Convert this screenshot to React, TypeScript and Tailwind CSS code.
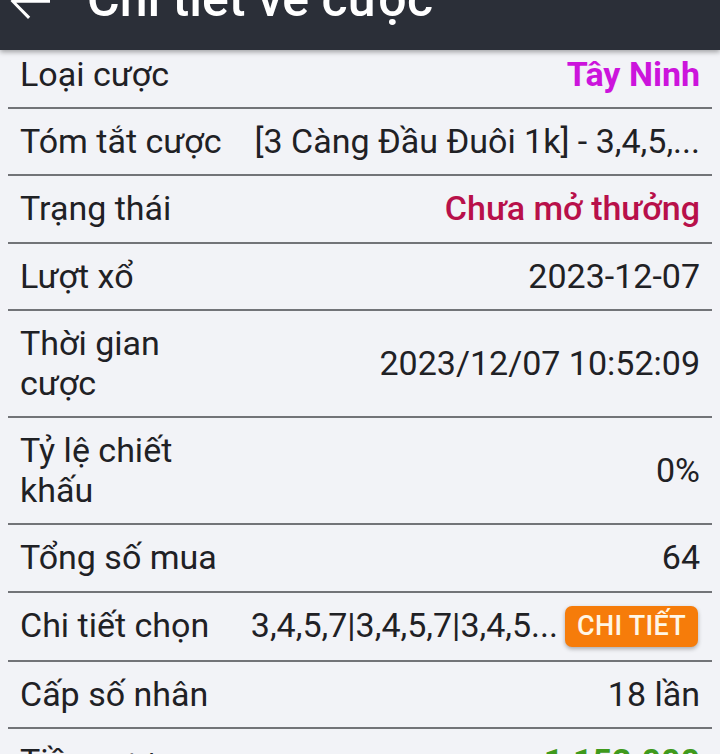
import { ReactNode } from 'react'

interface RowProps {
  label: string
  children: ReactNode
  first?: boolean
}

function Row({ label, children, first = false }: RowProps) {
  return (
    <div
      className={`mx-2 flex items-center border-b-2 border-[#727478] px-3 ${
        first ? 'pt-[5px] pb-[12px]' : 'py-[13px]'
      }`}
    >
      <div className="w-[212px] shrink-0 text-[#1f2125]">{label}</div>
      <div className="flex min-w-0 flex-1 items-center justify-end gap-[7px] whitespace-nowrap text-right text-[#1f2125]">
        {children}
      </div>
    </div>
  )
}

function BackArrow() {
  return (
    <svg width="60" height="60" viewBox="0 0 24 24" fill="#ffffff">
      <path d="M20 11.35H6.5l5.6-5.6-.9-.9L4.2 12l7 7.15.9-.9-5.6-5.6H20z" />
    </svg>
  )
}

export default function App() {
  return (
    <div
      className="h-[754px] w-[720px] overflow-hidden bg-[#f2f3f7] text-[34px] leading-[39.5px]"
      style={{ fontFamily: 'Roboto, "Noto Sans", sans-serif' }}
    >
      <header className="relative z-10 h-[50px] overflow-hidden bg-[#2b2f38] shadow-[0_2px_5px_rgba(0,0,0,0.35)]">
        <div className="-mt-[49px] flex h-[100px] items-center">
          <div className="w-[87px] shrink-0">
            <BackArrow />
          </div>
          <h1 className="-mt-[5px] text-[50px] leading-none font-medium text-white">Chi tiết về cược</h1>
        </div>
      </header>

      <Row label="Loại cược" first>
        <span className="font-bold text-[#cc14dc]">Tây Ninh</span>
      </Row>
      <Row label="Tóm tắt cược">
        <span>[3 Càng Đầu Đuôi 1k] - 3,4,5,...</span>
      </Row>
      <Row label="Trạng thái">
        <span className="font-medium text-[#b8104a]">Chưa mở thưởng</span>
      </Row>
      <Row label="Lượt xổ">
        <span>2023-12-07</span>
      </Row>
      <Row label="Thời gian cược">
        <span>2023/12/07 10:52:09</span>
      </Row>
      <Row label="Tỷ lệ chiết khấu">
        <span>0%</span>
      </Row>
      <Row label="Tổng số mua">
        <span>64</span>
      </Row>
      <Row label="Chi tiết chọn">
        <span>3,4,5,7|3,4,5,7|3,4,5...</span>
        <button className="mr-[2px] h-[41px] rounded-[7px] bg-[#f67c0a] px-[12px] text-[27px] leading-[41px] font-medium tracking-[0.3px] text-[#fff6e6] shadow-[0_2px_4px_rgba(0,0,0,0.3)]">
          CHI TIẾT
        </button>
      </Row>
      <Row label="Cấp số nhân">
        <span>18 lần</span>
      </Row>
      <Row label="Tiền cược">
        <span className="font-bold text-[#3f9a1c]">1.152.000</span>
      </Row>
    </div>
  )
}
